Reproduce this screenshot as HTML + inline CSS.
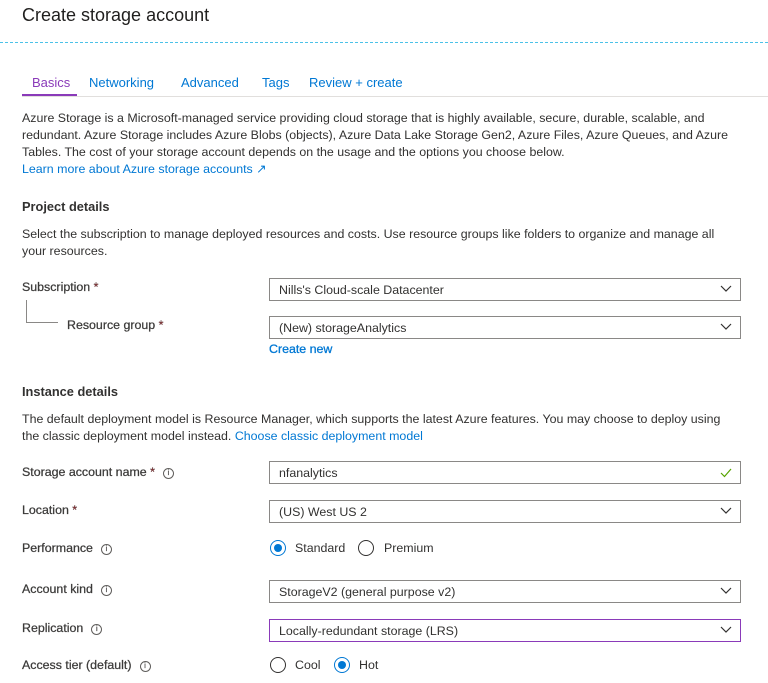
<!DOCTYPE html>
<html><head><style>
body{margin:0;width:768px;height:683px;background:#fff;font-family:"Liberation Sans",sans-serif;font-size:12.4px;color:#323130;position:relative;overflow:hidden}
.a{position:absolute;white-space:nowrap;line-height:17px}
.lnk{color:#0078d4}
.b{font-weight:bold}
.st{color:#a4262c}
.box{position:absolute;left:269px;width:470px;height:21px;border:1px solid #8a8886;box-sizing:content-box}
.box span{position:absolute;left:9px;top:3px;line-height:16px}
.chev{position:absolute;right:8px;top:6px}
.i{display:inline-block;width:9px;height:9px;border:1px solid #605e5c;border-radius:50%;font-size:7px;line-height:9px;text-align:center;margin-left:8px;vertical-align:1px;color:#605e5c}
.r{position:absolute;width:16px;height:16px;border:1px solid #323130;border-radius:50%;box-sizing:border-box}
.r.on{border-color:#0078d4}
.r.on:after{content:"";position:absolute;left:3px;top:3px;width:8px;height:8px;border-radius:50%;background:#0078d4}
.lab{color:#3b3a39;-webkit-text-stroke:0.25px #3b3a39}
</style></head><body>
<div class="a" style="left:22px;top:4px;font-size:18px;line-height:22px;color:#201f1e">Create storage account</div>
<div style="position:absolute;left:0;top:42px;width:768px;border-top:1px dashed #4cc2e8"></div>
<div class="a" style="left:32px;top:74px;font-size:13px;color:#8a3ab9">Basics</div>
<div class="a lnk" style="left:89px;top:74px;font-size:13px">Networking</div>
<div class="a lnk" style="left:181px;top:74px;font-size:13px">Advanced</div>
<div class="a lnk" style="left:262px;top:74px;font-size:13px">Tags</div>
<div class="a lnk" style="left:309px;top:74px;font-size:13px">Review + create</div>
<div style="position:absolute;left:22px;top:96px;width:746px;border-top:1px solid #e1dfdd"></div>
<div style="position:absolute;left:22px;top:94px;width:55px;height:2px;background:#8a3ab9"></div>
<div class="a" style="left:22px;top:110px">Azure Storage is a Microsoft-managed service providing cloud storage that is highly available, secure, durable, scalable, and</div>
<div class="a" style="left:22px;top:127px">redundant. Azure Storage includes Azure Blobs (objects), Azure Data Lake Storage Gen2, Azure Files, Azure Queues, and Azure</div>
<div class="a" style="left:22px;top:144px">Tables. The cost of your storage account depends on the usage and the options you choose below.</div>
<div class="a lnk" style="left:22px;top:161px">Learn more about Azure storage accounts &#x2197;</div>
<div class="a b" style="left:22px;top:198px;font-size:12.8px">Project details</div>
<div class="a" style="left:22px;top:226px">Select the subscription to manage deployed resources and costs. Use resource groups like folders to organize and manage all</div>
<div class="a" style="left:22px;top:243px">your resources.</div>
<div class="a lab" style="left:22px;top:279px">Subscription <span class="st">*</span></div>
<div class="box" style="top:278px"><span>Nills's Cloud-scale Datacenter</span><svg class="chev" width="12" height="8"><path d="M1 1l5 5 5-5" stroke="#323130" fill="none" stroke-width="1.2"/></svg></div>
<div style="position:absolute;left:26px;top:300px;width:31px;height:22px;border-left:1px solid #8a8886;border-bottom:1px solid #8a8886"></div>
<div class="a lab" style="left:67px;top:317px">Resource group <span class="st">*</span></div>
<div class="box" style="top:316px"><span>(New) storageAnalytics</span><svg class="chev" width="12" height="8"><path d="M1 1l5 5 5-5" stroke="#323130" fill="none" stroke-width="1.2"/></svg></div>
<div class="a lnk" style="left:269px;top:341px;-webkit-text-stroke:0.3px #0078d4">Create new</div>
<div class="a b" style="left:22px;top:383px;font-size:12.8px">Instance details</div>
<div class="a" style="left:22px;top:411px">The default deployment model is Resource Manager, which supports the latest Azure features. You may choose to deploy using</div>
<div class="a" style="left:22px;top:428px">the classic deployment model instead. <span class="lnk">Choose classic deployment model</span></div>
<div class="a lab" style="left:22px;top:464px">Storage account name <span class="st">*</span><span class="i">i</span></div>
<div class="box" style="top:461px"><span>nfanalytics</span><svg class="chev" width="12" height="10" style="top:6px"><path d="M1 5l3.5 3.5L11 1" stroke="#57a300" fill="none" stroke-width="1.2"/></svg></div>
<div class="a lab" style="left:22px;top:502px">Location <span class="st">*</span></div>
<div class="box" style="top:500px"><span>(US) West US 2</span><svg class="chev" width="12" height="8"><path d="M1 1l5 5 5-5" stroke="#323130" fill="none" stroke-width="1.2"/></svg></div>
<div class="a lab" style="left:22px;top:540px">Performance<span class="i">i</span></div>
<div class="r on" style="left:270px;top:540px"></div>
<div class="a" style="left:295px;top:540px">Standard</div>
<div class="r" style="left:358px;top:540px"></div>
<div class="a" style="left:384px;top:540px">Premium</div>
<div class="a lab" style="left:22px;top:581px">Account kind<span class="i">i</span></div>
<div class="box" style="top:580px"><span>StorageV2 (general purpose v2)</span><svg class="chev" width="12" height="8"><path d="M1 1l5 5 5-5" stroke="#323130" fill="none" stroke-width="1.2"/></svg></div>
<div class="a lab" style="left:22px;top:620px">Replication<span class="i">i</span></div>
<div class="box" style="top:619px;border-color:#8a3ab9"><span>Locally-redundant storage (LRS)</span><svg class="chev" width="12" height="8"><path d="M1 1l5 5 5-5" stroke="#323130" fill="none" stroke-width="1.2"/></svg></div>
<div class="a lab" style="left:22px;top:657px">Access tier (default)<span class="i">i</span></div>
<div class="r" style="left:270px;top:657px"></div>
<div class="a" style="left:295px;top:657px">Cool</div>
<div class="r on" style="left:334px;top:657px"></div>
<div class="a" style="left:359px;top:657px">Hot</div>
</body></html>
